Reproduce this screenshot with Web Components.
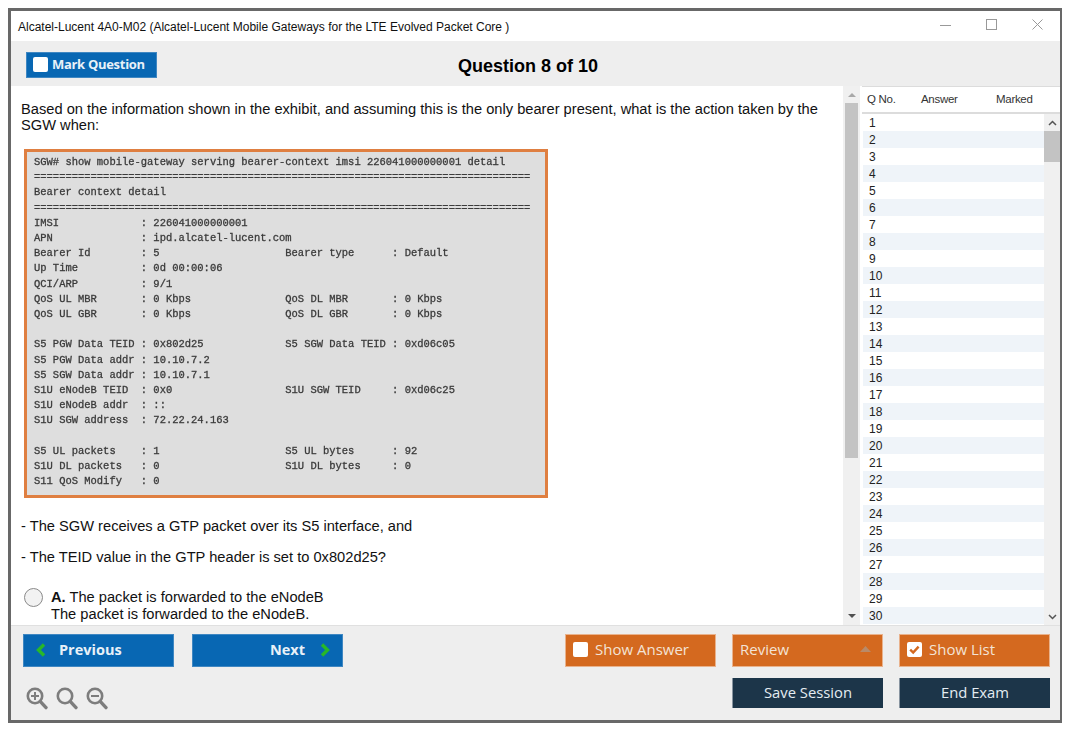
<!DOCTYPE html>
<html>
<head>
<meta charset="utf-8">
<title>Exam</title>
<style>
  html, body { margin: 0; background: #fff; }
  body { padding: 8px 0 0 8px; font-family: "Liberation Sans", Arial, sans-serif; }
</style>
</head>
<body>
<app-window>
  <title-bar slot="title">Alcatel-Lucent 4A0-M02 (Alcatel-Lucent Mobile Gateways for the LTE Evolved Packet Core )</title-bar>
  <exam-toolbar slot="toolbar">Question 8 of 10</exam-toolbar>
  <question-pane slot="question"></question-pane>
  <question-list slot="list"></question-list>
  <exam-footer slot="footer"></exam-footer>
</app-window>

<script>
const define = (name, css, html) => {
  customElements.define(name, class extends HTMLElement {
    constructor() {
      super();
      this.attachShadow({ mode: 'open' });
      this.shadowRoot.innerHTML = `<style>${css}</style>${typeof html === 'function' ? html(this) : html}`;
    }
  });
};

define('app-window', `
  :host {
    display: grid;
    box-sizing: border-box;
    width: 1054px;
    height: 715px;
    border: 3px solid #686868;
    border-right-width: 2px;
    grid-template-columns: 851px 1fr;
    grid-template-rows: 30px 45px 539px 1fr;
    background: #fff;
    overflow: hidden;
  }
  .title, .toolbar, .footer { grid-column: 1 / 3; display: block; }
`, `
  <div class="title"><slot name="title"></slot></div>
  <div class="toolbar"><slot name="toolbar"></slot></div>
  <slot name="question"></slot>
  <slot name="list"></slot>
  <div class="footer"><slot name="footer"></slot></div>
`);

define('title-bar', `
  :host {
    display: flex;
    height: 30px;
    align-items: center;
    padding-left: 7px;
    font: 12px/14px "Liberation Sans", Arial, sans-serif;
    color: #111;
    background: #fff;
  }
  .text { flex: 1; padding-top: 2px; }
  svg { display: block; }
  .ctl { display: flex; gap: 35px; padding-right: 17px; align-items: center; margin-top: -3px; }
`, `
  <div class="text"><slot></slot></div>
  <div class="ctl">
    <svg width="11" height="11" viewBox="0 0 11 11"><path d="M0 6.5h11" stroke="#999" fill="none"/></svg>
    <svg width="11" height="11" viewBox="0 0 11 11"><rect x=".5" y=".5" width="10" height="10" fill="none" stroke="#999"/></svg>
    <svg width="11" height="11" viewBox="0 0 11 11"><path d="M.5.5l10 10M10.5.5l-10 10" stroke="#999" fill="none"/></svg>
  </div>
`);

define('check-box', `
  :host { display: inline-block; width: 15px; height: 15px; flex: none; }
  svg { display: block; }
`, host => `
  <svg width="15" height="15" viewBox="0 0 15 15">
    <rect width="15" height="15" rx="2" fill="#fff"/>
    ${host.hasAttribute('checked') ? '<path d="M3.2 7.6l3 3 5.4-6" fill="none" stroke="#d4691f" stroke-width="2.4"/>' : ''}
  </svg>
`);

define('exam-toolbar', `
  :host {
    display: flex;
    height: 45px;
    box-sizing: border-box;
    background: #eee;
    padding: 11px 0 0 15px;
  }
  .mark {
    display: flex;
    align-items: center;
    gap: 4px;
    box-sizing: border-box;
    width: 131px;
    height: 26px;
    padding: 0 0 2px 6px;
    background: #0867b3;
    border: 1px solid #3f87c2;
    color: #e8f1f8;
    font: 700 13px "Open Sans", sans-serif;
    letter-spacing: -.3px;
  }
  h1 {
    margin: 3px 0 0 301px;
    font: 700 18px/22px "Liberation Sans", Arial, sans-serif;
    color: #000;
  }
`, `
  <div class="mark"><check-box></check-box><span>Mark Question</span></div>
  <h1><slot></slot></h1>
`);

define('scroll-bar', `
  :host {
    display: flex;
    flex-direction: column;
    box-sizing: border-box;
    width: 17px;
    background: #f0f0f0;
    flex: none;
  }
  .arrow { height: 17px; display: flex; align-items: center; justify-content: center; flex: none; }
  .thumb { background: #c3c3c3; flex: none; }
  :host(:not([chevron])) .thumb { margin: 0 2px; }
  .fill { flex: 1; }
  svg { display: block; }
`, host => {
  const chev = host.hasAttribute('chevron');
  const up = chev ? '<svg width="9" height="6" viewBox="0 0 9 6"><path d="M1 5l3.5-3.5L8 5" fill="none" stroke="#555" stroke-width="1.5"/></svg>'
                  : '<svg width="8" height="5" viewBox="0 0 8 5"><path d="M0 5l4-4 4 4z" fill="#a8a8a8"/></svg>';
  const down = chev ? '<svg width="9" height="6" viewBox="0 0 9 6"><path d="M1 1l3.5 3.5L8 1" fill="none" stroke="#555" stroke-width="1.5"/></svg>'
                    : '<svg width="8" height="5" viewBox="0 0 8 5"><path d="M0 0l4 4 4-4z" fill="#505050"/></svg>';
  return `<div class="arrow">${up}</div>
    <div class="thumb" style="height:${host.getAttribute('thumb')}px"></div>
    <div class="fill"></div>
    <div class="arrow">${down}</div>`;
});

const pad = (a, b = '', c, d) => {
  let left = a.padEnd(17) + ': ' + b;
  if (c) left = left.padEnd(40) + c.padEnd(17) + ': ' + d;
  return left;
};
const exhibitText = [
  'SGW# show mobile-gateway serving bearer-context imsi 226041000000001 detail',
  '='.repeat(79),
  'Bearer context detail',
  '='.repeat(79),
  pad('IMSI', '226041000000001'),
  pad('APN', 'ipd.alcatel-lucent.com'),
  pad('Bearer Id', '5', 'Bearer type', 'Default'),
  pad('Up Time', '0d 00:00:06'),
  pad('QCI/ARP', '9/1'),
  pad('QoS UL MBR', '0 Kbps', 'QoS DL MBR', '0 Kbps'),
  pad('QoS UL GBR', '0 Kbps', 'QoS DL GBR', '0 Kbps'),
  '',
  pad('S5 PGW Data TEID', '0x802d25', 'S5 SGW Data TEID', '0xd06c05'),
  pad('S5 PGW Data addr', '10.10.7.2'),
  pad('S5 SGW Data addr', '10.10.7.1'),
  pad('S1U eNodeB TEID', '0x0', 'S1U SGW TEID', '0xd06c25'),
  pad('S1U eNodeB addr', '::'),
  pad('S1U SGW address', '72.22.24.163'),
  '',
  pad('S5 UL packets', '1', 'S5 UL bytes', '92'),
  pad('S1U DL packets', '0', 'S1U DL bytes', '0'),
  pad('S11 QoS Modify', '0')
].join('\n');

define('exhibit-image', `
  :host {
    display: block;
    box-sizing: border-box;
    width: 524px;
    height: 349px;
    border: 3px solid #df7f41;
    background: #dedede;
    padding: 3px 0 0 7px;
    overflow: hidden;
    filter: blur(.7px);
  }
  pre {
    margin: 0;
    font: 400 10.47px/15.2px "Liberation Mono", monospace;
    color: #333;
    -webkit-text-stroke: .3px #444;
  }
`, `<pre>${exhibitText}</pre>`);

define('question-pane', `
  :host {
    display: flex;
    min-width: 0;
    background: #fff;
    height: 539px;
    overflow: hidden;
  }
  .body {
    flex: 1;
    min-width: 0;
    padding: 15px 20px 0 10px;
    font: 14.67px/16px "Liberation Sans", Arial, sans-serif;
    color: #111;
    overflow: hidden;
  }
  p { margin: 0; }
  exhibit-image { margin: 16px 0 0 3px; }
  .s1 { margin-top: 20px; }
  .s2 { margin-top: 15px; }
  .opt { display: flex; gap: 8px; margin: 24px 0 0 3px; line-height: 17px; }
  .radio {
    flex: none;
    box-sizing: border-box;
    width: 19px;
    height: 19px;
    margin-top: -1px;
    border: 1px solid #8a8a8a;
    border-radius: 50%;
    background: #f2f2f2;
  }
  scroll-bar { margin-right: 2px; }
`, `
  <div class="body">
    <p>Based on the information shown in the exhibit, and assuming this is the only bearer present, what is the action taken by the SGW when:</p>
    <exhibit-image></exhibit-image>
    <p class="s1">- The SGW receives a GTP packet over its S5 interface, and</p>
    <p class="s2">- The TEID value in the GTP header is set to 0x802d25?</p>
    <div class="opt">
      <span class="radio"></span>
      <span><b>A.</b> The packet is forwarded to the eNodeB<br>The packet is forwarded to the eNodeB.</span>
    </div>
  </div>
  <scroll-bar thumb="355"></scroll-bar>
`);

define('question-list', `
  :host {
    display: flex;
    flex-direction: column;
    min-width: 0;
    height: 539px;
    overflow: hidden;
    background: #fff;
    border-top: 1px solid #dcdcdc;
    box-sizing: border-box;
    font-family: "Liberation Sans", Arial, sans-serif;
    color: #222;
  }
  .head {
    display: grid;
    grid-template-columns: 54px 75px 1fr;
    height: 27px;
    padding: 0 0 1px 5px;
    align-items: center;
    flex: none;
    font-size: 11.5px;
    letter-spacing: -.3px;
    color: #333;
    border-bottom: 2px solid #dcdcdc;
    box-sizing: border-box;
  }
  .wrap { flex: 1; display: flex; min-height: 0; }
  .rows { flex: 1; margin-left: 1px; min-width: 0; }
  .row { height: 17px; line-height: 17px; font-size: 12px; padding: 1px 0 0 6px; box-sizing: border-box; }
  .row:nth-child(even) { background: #eff4f9; }
  scroll-bar { width: 16px; }
`, () => `
  <div class="head"><span>Q No.</span><span>Answer</span><span>Marked</span></div>
  <div class="wrap">
    <div class="rows">${Array.from({ length: 30 }, (_, i) => `<div class="row">${i + 1}</div>`).join('')}</div>
    <scroll-bar chevron thumb="31"></scroll-bar>
  </div>
`);

define('exam-button', `
  :host {
    display: flex;
    box-sizing: border-box;
    width: 151px;
    align-items: center;
    font: 400 15px "Open Sans", sans-serif;
    color: #f3e3d6;
    padding: 0 7px 3px;
    gap: 7px;
    height: 33px;
    flex: none;
  }
  :host([tone=blue]) { background: #0867b3; border: 1px solid #3f87c2; color: #e8f1f8; font-weight: 700; font-size: 14.5px; padding-bottom: 2px; }
  :host([tone=orange]) { background: #d4691f; border: 1px solid #e9b28c; }
  :host([tone=navy]) { background: #1c3549; border-left: 1px solid #8894a0; height: 30px; justify-content: center; color: #e4ecf2; font-size: 14.8px; padding-bottom: 2px; }
`, `<slot></slot>`);

define('exam-footer', `
  :host {
    display: flex;
    flex-direction: column;
    gap: 11px;
    height: 95px;
    box-sizing: border-box;
    padding: 8px 10px 0 12px;
    background: #eee;
    border-top: 1px solid #e0e0e0;
  }
  .row { display: flex; justify-content: space-between; }
  .group { display: flex; gap: 18px; }
  .right { gap: 16px; }
  .tools { display: flex; gap: 8px; align-items: flex-start; padding: 9px 0 0 3px; }
  svg { display: block; flex: none; }
`, () => {
  const lens = inner => `<svg width="22" height="23" viewBox="0 0 22 23">
    <circle cx="9" cy="9" r="7.2" fill="none" stroke="#7d7d7d" stroke-width="2.6"/>
    <path d="M14.2 14.4L20 20.6" stroke="#7d7d7d" stroke-width="3.4" stroke-linecap="round"/>${inner}</svg>`;
  return `
  <div class="row">
    <div class="group">
      <exam-button tone="blue" style="padding-left:12px;gap:13px"><svg width="10" height="14" viewBox="0 0 10 14"><path d="M8 1.5L2.5 7 8 12.5" fill="none" stroke="#28b828" stroke-width="3.4"/></svg><span>Previous</span></exam-button>
      <exam-button tone="blue" style="padding-right:12px;gap:15px;justify-content:flex-end"><span>Next</span><svg width="10" height="14" viewBox="0 0 10 14"><path d="M2 1.5L7.5 7 2 12.5" fill="none" stroke="#28b828" stroke-width="3.4"/></svg></exam-button>
    </div>
    <div class="group right">
      <exam-button tone="orange"><check-box></check-box><span>Show Answer</span></exam-button>
      <exam-button tone="orange"><span style="flex:1">Review</span><svg width="11" height="6" viewBox="0 0 11 6" style="margin-right:4px"><path d="M0 6l5.5-6L11 6z" fill="#b98a68"/></svg></exam-button>
      <exam-button tone="orange"><check-box checked></check-box><span>Show List</span></exam-button>
    </div>
  </div>
  <div class="row">
    <div class="tools">
      ${lens('<path d="M5 9h8M9 5v8" stroke="#7d7d7d" stroke-width="2"/>')}
      ${lens('')}
      ${lens('<path d="M5 9h8" stroke="#7d7d7d" stroke-width="2"/>')}
    </div>
    <div class="group right">
      <exam-button tone="navy"><span>Save Session</span></exam-button>
      <exam-button tone="navy"><span>End Exam</span></exam-button>
    </div>
  </div>`;
});
</script>
</body>
</html>
